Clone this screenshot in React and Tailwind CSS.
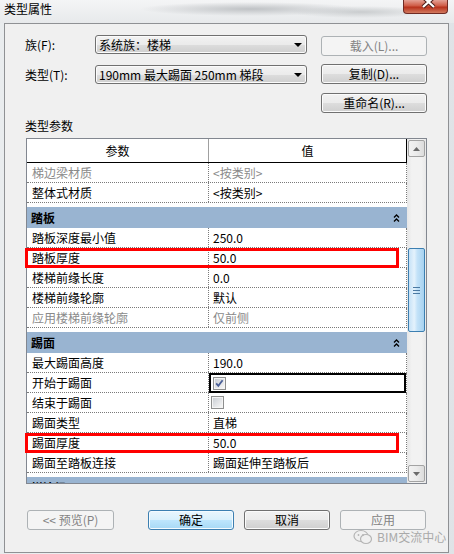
import React from 'react';

const GROUPS = [
    { rows: [
        { label: '梯边梁材质', value: '<按类别>', gray: true },
        { label: '整体式材质', value: '<按类别>' },
    ] },
    { title: '踏板', rows: [
        { label: '踏板深度最小值', value: '250.0' },
        { label: '踏板厚度', value: '50.0', marked: true },
        { label: '楼梯前缘长度', value: '0.0' },
        { label: '楼梯前缘轮廓', value: '默认' },
        { label: '应用楼梯前缘轮廓', value: '仅前侧', gray: true },
    ] },
    { title: '踢面', rows: [
        { label: '最大踢面高度', value: '190.0' },
        { label: '开始于踢面', check: true, checked: true, focus: true },
        { label: '结束于踢面', check: true },
        { label: '踢面类型', value: '直梯' },
        { label: '踢面厚度', value: '50.0', marked: true },
        { label: '踢面至踏板连接', value: '踢面延伸至踏板后' },
    ] },
    { title: '梯边梁', clipped: true, rows: [] },
];

const BTN_NORMAL = 'border-[#707070] text-black bg-[linear-gradient(#f2f2f2_0%,#ebebeb_50%,#dddddd_51%,#cfcfcf_100%)] shadow-[inset_0_0_0_1px_#fbfbfb]';
const BTN_PRIMARY = 'border-[#3c7fb1] text-black bg-[linear-gradient(#eaf6fd_0%,#d9f0fc_50%,#bee6fd_51%,#a7d9f5_100%)] shadow-[inset_0_0_0_1px_#f4fbff]';
const BTN_DISABLED = 'border-[#adb2b5] text-[#838383] bg-[#f4f4f4]';

function Btn({ children, kind = 'normal', className = '' }) {
    const look = kind === 'disabled' ? BTN_DISABLED : kind === 'primary' ? BTN_PRIMARY : BTN_NORMAL;
    return (
        <div className={`flex items-center justify-center h-[20px] rounded-[3px] border text-[12px] leading-none ${look} ${className}`}>
            {children}
        </div>
    );
}

function Combo({ text, className = '' }) {
    return (
        <div className={`flex items-center justify-between w-[212px] h-[19px] rounded-[3px] border border-[#707070] pl-[3px] pr-[4px] text-[12px] text-black bg-[linear-gradient(#f2f2f2_0%,#ebebeb_50%,#dddddd_51%,#cfcfcf_100%)] shadow-[inset_0_0_0_1px_#fbfbfb] ${className}`}>
            <span className="whitespace-pre">{text}</span>
            <svg width="8" height="4" viewBox="0 0 8 4"><path d="M0 0 H8 L4 4 Z" fill="#000" /></svg>
        </div>
    );
}

function Chevrons() {
    return (
        <svg width="7" height="8" viewBox="0 0 7 8">
            <path d="M1 3.5 L3.5 1 L6 3.5" fill="none" stroke="#000" strokeWidth="1.3" />
            <path d="M1 7.5 L3.5 5 L6 7.5" fill="none" stroke="#000" strokeWidth="1.3" />
        </svg>
    );
}

function CheckBox({ checked }) {
    return (
        <svg width="13" height="13" viewBox="0 0 13 13">
            <defs>
                <linearGradient id={checked ? 'cbg1' : 'cbg0'} x1="0" y1="0" x2="1" y2="1">
                    <stop offset="0" stopColor="#cbcfd5" />
                    <stop offset="1" stopColor="#f6f6f6" />
                </linearGradient>
            </defs>
            <rect x="0.5" y="0.5" width="12" height="12" fill="#f4f4f4" stroke="#8e8f8f" />
            <rect x="2" y="2" width="9" height="9" fill={`url(#${checked ? 'cbg1' : 'cbg0'})`} />
            {checked && <path d="M3.2 6.4 L5.3 8.8 L9.6 3.2" fill="none" stroke="#4a5f97" strokeWidth="1.8" />}
        </svg>
    );
}

function ScrollArrow({ up }) {
    return (
        <div className="flex items-center justify-center w-[17px] h-[17px] ml-[1px] rounded-[2px] border border-[#a3a3a3] bg-[linear-gradient(90deg,#f2f2f2,#ebebeb_50%,#dcdcdc)]">
            <svg width="7" height="4" viewBox="0 0 7 4">
                <path d={up ? 'M0 4 L3.5 0 L7 4 Z' : 'M0 0 L3.5 4 L7 0 Z'} fill="#6b6b6b" />
            </svg>
        </div>
    );
}

function Row({ row }) {
    const tone = row.gray ? 'text-[#8a8a8a]' : 'text-black';
    return (
        <div className="relative flex h-[20px] w-[380px] border-b border-r border-dotted border-[#7a7a7a] bg-white text-[12px]">
            <div className={`flex items-center w-[182px] pl-[5px] border-r border-dotted border-[#7a7a7a] ${tone}`}>
                {row.label}
            </div>
            {row.check ? (
                <div className={`flex items-center flex-1 pl-[2px] ${row.focus ? 'border-2 border-black -mb-[1px]' : ''}`}>
                    <CheckBox checked={row.checked} />
                </div>
            ) : (
                <div className={`flex items-center flex-1 pl-[4px] ${tone}`}>{row.value}</div>
            )}
            {row.marked && (
                <div className="absolute left-[-2px] top-0 w-[374px] h-[20px] border-[3px] border-[#ff0000]" />
            )}
        </div>
    );
}

export default function App() {
    return (
        <div className="w-[454px] h-[554px] overflow-hidden bg-[linear-gradient(90deg,#e9ecee,#f3f4f5_60%,#dfe3e7)] font-['Noto_Sans_CJK_SC','Microsoft_YaHei',sans-serif] text-black">
            {/* Aero title bar */}
            <div className="flex justify-between h-[23px] bg-[radial-gradient(ellipse_110px_7px_at_250px_9px,#bfc2c5,transparent),radial-gradient(ellipse_70px_6px_at_360px_12px,#c9ccce,transparent),linear-gradient(#f4f5f6,#e7e9eb)]">
                <span className="pl-[4px] h-[18px] leading-[18px] text-[12px]">类型属性</span>
                <div className="mr-[6px] w-[45px] h-[14px] rounded-b-[4px] border border-t-0 border-[#6f2b24] bg-[linear-gradient(#e4a195,#cf5b45_45%,#b8321c_55%,#d27a5f)] overflow-hidden">
                    <svg width="45" height="14" viewBox="0 0 45 14">
                        <path d="M19 -3 L30 7 M30 -3 L19 7" stroke="#4d1f1a" strokeWidth="4.2" />
                        <path d="M19 -3 L30 7 M30 -3 L19 7" stroke="#ffffff" strokeWidth="2.2" />
                    </svg>
                </div>
            </div>

            {/* Dialog body */}
            <div className="relative ml-[4px] w-[445px] h-[530px] border border-[#8f9194] bg-[#f0f0f0]">
                <div className="flex items-start mt-[11px] pl-[20px]">
                    <span className="w-[70px] h-[19px] leading-[19px] text-[12px]">族(F):</span>
                    <Combo text="系统族：楼梯" />
                    <Btn kind="disabled" className="ml-[14px] mt-[1px] w-[106px]">载入(L)...</Btn>
                </div>
                <div className="flex items-start mt-[8px] pl-[20px]">
                    <span className="w-[70px] h-[19px] mt-[1px] leading-[19px] text-[12px]">类型(T):</span>
                    <Combo text="190mm 最大踢面 250mm 梯段" className="mt-[1px]" />
                    <Btn className="ml-[14px] w-[106px]">复制(D)...</Btn>
                </div>
                <div className="flex mt-[9px] pl-[316px]">
                    <Btn className="w-[106px]">重命名(R)...</Btn>
                </div>

                <div className="mt-[5px] pl-[20px] h-[16px] leading-[16px] text-[12px]">类型参数</div>

                {/* Parameter grid */}
                <div className="flex ml-[21px] mt-[4px] w-[401px] h-[346px] border border-[#828790] bg-white">
                    <div className="flex flex-col w-[380px]">
                        <div className="flex h-[24px] w-[380px] border-b border-r border-black text-[12px]">
                            <div className="flex items-center justify-center w-[182px] border-r border-[#a0a0a0]">参数</div>
                            <div className="flex items-center justify-center flex-1">值</div>
                        </div>
                        {GROUPS.map((g, i) => (
                            <div key={i} className="flex flex-col">
                                {g.title && (
                                    <div className={`mt-[4px] w-[380px] overflow-hidden ${g.clipped ? 'h-[6px]' : 'h-[21px]'}`}>
                                        <div className="flex items-center justify-between h-[21px] pl-[4px] pr-[7px] bg-[#99b4d1] text-[12px] font-bold">
                                            <span>{g.title}</span>
                                            <Chevrons />
                                        </div>
                                    </div>
                                )}
                                {g.rows.map((r) => <Row key={r.label} row={r} />)}
                            </div>
                        ))}
                    </div>

                    {/* Scrollbar */}
                    <div className="flex flex-col w-[19px] bg-[linear-gradient(90deg,#e6e6e6,#f2f2f2_25%,#f2f2f2_75%,#e9e9e9)]">
                        <div className="mt-[1px]"><ScrollArrow up /></div>
                        <div className="flex items-center justify-center w-[17px] h-[84px] ml-[1px] mt-[91px] rounded-[2px] border border-[#3c7fb1] bg-[linear-gradient(90deg,#c6e2f7,#e4f2fc_35%,#c3e2f8_55%,#a7d2f0)]">
                            <div className="flex flex-col gap-[2px]">
                                <div className="w-[7px] h-[1px] bg-[#4b7aa3]" />
                                <div className="w-[7px] h-[1px] bg-[#4b7aa3]" />
                                <div className="w-[7px] h-[1px] bg-[#4b7aa3]" />
                            </div>
                        </div>
                        <div className="flex-1" />
                        <div className="mb-[1px]"><ScrollArrow /></div>
                    </div>
                </div>

                {/* Bottom buttons */}
                <div className="flex mt-[26px] ml-[22px]">
                    <Btn kind="disabled" className="w-[87px]">&lt;&lt; 预览(P)</Btn>
                    <Btn kind="primary" className="ml-[34px] w-[86px]">确定</Btn>
                    <Btn className="ml-[10px] w-[86px]">取消</Btn>
                    <Btn kind="disabled" className="ml-[10px] w-[86px]">应用</Btn>
                </div>

                {/* Watermark */}
                <div className="absolute left-[348px] top-[504px] flex items-center gap-[4px] text-[12px] text-[#a9a9a9]">
                    <svg width="20" height="16" viewBox="0 0 20 16">
                        <ellipse cx="8" cy="7" rx="7" ry="5.5" fill="none" stroke="#b5b5b5" strokeWidth="1.2" />
                        <ellipse cx="13" cy="10" rx="5.5" ry="4.5" fill="#f0f0f0" stroke="#b5b5b5" strokeWidth="1.2" />
                        <circle cx="5.5" cy="6" r="0.9" fill="#b5b5b5" />
                        <circle cx="10" cy="6" r="0.9" fill="#b5b5b5" />
                    </svg>
                    <span>BIM交流中心</span>
                </div>
            </div>
        </div>
    );
}
